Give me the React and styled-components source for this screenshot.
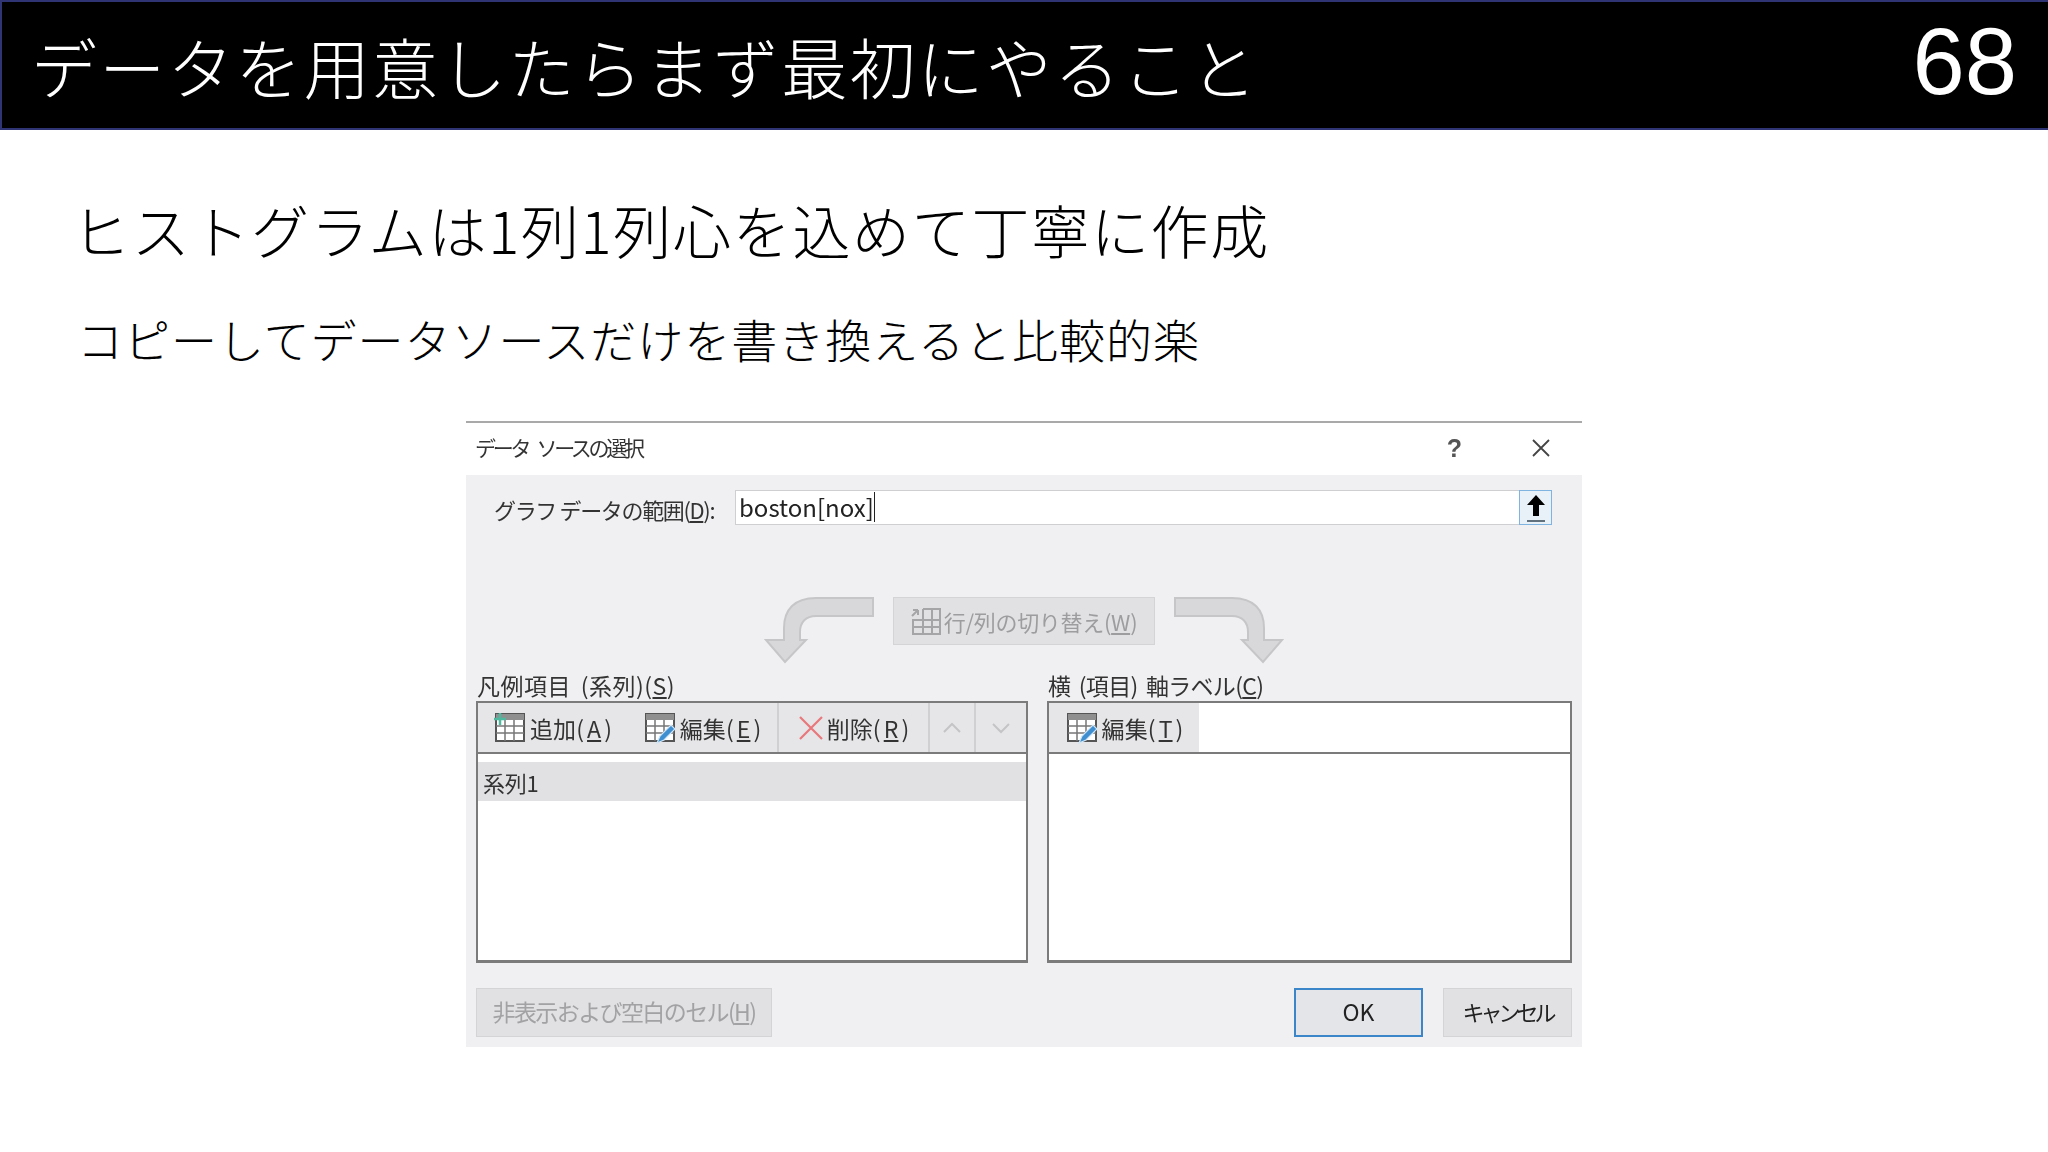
import React from "react";
import styled, { createGlobalStyle } from "styled-components";

const Global = createGlobalStyle`
  html, body { margin: 0; padding: 0; background: #fff; }
  body { font-family: "Noto Sans CJK JP", "Noto Sans", sans-serif; }
`;
const Page = styled.div`width: 2048px; height: 1152px; overflow: hidden; background: #fff;`;
const Header = styled.header`
  box-sizing: border-box; height: 130px; background: #000; border: 2px solid #2f3474;
  border-right: none; display: flex; justify-content: space-between; align-items: center;
  padding: 0 31px 0 29px; color: #fff;
`;
const Title = styled.h1`margin: 0; font-size: 66px; font-weight: 300; line-height: 1; letter-spacing: 2.2px;`;
const PageNo = styled.div`font-family: "Liberation Sans", sans-serif; font-size: 94px; line-height: 1; margin-top: -7px;`;
const Main = styled.main`padding: 64px 0 0 72px;`;
const Heading = styled.h2`margin: 0; font-size: 58px; font-weight: 300; line-height: 70px; color: #000; letter-spacing: 1.7px;`;
const Sub = styled.p`margin: 44px 0 0 5px; font-size: 46px; font-weight: 300; line-height: 60px; color: #000; letter-spacing: 1px;`;

const Dialog = styled.section`
  box-sizing: border-box; width: 1116px; height: 626px; margin: 53px 0 0 394px;
  border-top: 2px solid #a9a9a9; background: #f0f0f2; display: flex; flex-direction: column;
  color: #2a2a2a; font-size: 23px; filter: blur(0.6px);
`;
const TitleBar = styled.div`
  height: 52px; background: #fff; display: flex; align-items: center; justify-content: space-between;
  padding: 0 31px 0 9px; flex-shrink: 0;
`;
const DialogTitle = styled.span`font-size: 21px; letter-spacing: -3.3px; word-spacing: 7px; color: #333; margin-top: -5px;`;
const TitleActions = styled.div`display: flex; align-items: center; gap: 69px; margin-top: -2px;`;
const Help = styled.span`font-family: "Liberation Sans", sans-serif; font-size: 25px; font-weight: 700; color: #555;`;
const Body = styled.div`flex: 1; padding: 15px 10px 0; display: flex; flex-direction: column;`;
const RangeRow = styled.div`display: flex; align-items: center; height: 35px; padding-left: 18px; padding-right: 20px;`;
const RangeLabel = styled.label`width: 241px; flex-shrink: 0; font-size: 22px; letter-spacing: -1.35px; padding-top: 3px; color: #333;`;
const RangeInput = styled.div`
  flex: 1; height: 35px; box-sizing: border-box; background: #fff; border: 1px solid #cfcfd2;
  display: flex; align-items: center; justify-content: space-between;
`;
const RangeText = styled.span`font-size: 24px; color: #222; padding-left: 3px; line-height: 30px; margin-top: -2px; border-right: 1px solid #222;`;
const Collapse = styled.span`
  width: 33px; height: 35px; box-sizing: border-box; margin: -1px -1px -1px 0; border: 1px solid #7fb4e0;
  background: #e8f1f8; display: flex; align-items: center; justify-content: center;
`;
const SwitchRow = styled.div`
  display: flex; justify-content: flex-start; align-items: flex-start; height: 72px; margin-top: 71px;
  padding-left: 288px;
`;
const SwitchButton = styled.div`
  width: 262px; height: 48px; box-sizing: border-box; margin: 1px 19px 0 19px; background: #e1e1e3; border: 1px solid #d4d4d6;
  display: flex; align-items: center; justify-content: center; gap: 1px; color: #9d9d9f; font-size: 22px; letter-spacing: -0.3px; padding-right: 2px;
`;
const Panels = styled.div`display: grid; grid-template-columns: 552px 525px; gap: 0 19px; margin-top: 3px;`;
const PanelCol = styled.div`display: flex; flex-direction: column;`;
const PanelLabel = styled.div`
  height: 30px; line-height: 28px; font-size: 23px; letter-spacing: ${p => p.$ls}px; word-spacing: 4px;
  color: #333; padding-left: 1px; white-space: pre;
`;
const Panel = styled.div`
  height: 262px; box-sizing: border-box; background: #fff; border: 2px solid #7b7b7b; border-bottom-width: 3px; display: flex; flex-direction: column;
`;
const Toolbar = styled.div`display: flex; height: 49px; flex-shrink: 0; border-bottom: 2px solid #7b7b7b;`;
const ToolButton = styled.div`
  width: ${p => p.$w}px; flex-shrink: 0; box-sizing: border-box; background: #e6e6e8;
  border-right: ${p => (p.$sep ? "2px solid #d0d0d2" : "none")};
  display: flex; align-items: center; justify-content: center; gap: 3px;
  font-size: 23px; letter-spacing: 0.1px; color: #333;
`;
const ListItem = styled.div`
  margin-top: 8px; height: 39px; background: #e1e1e4; display: flex; align-items: center;
  padding-left: 5px; font-size: 22px; color: #333; letter-spacing: -0.3px;
`;
const Footer = styled.div`display: flex; align-items: flex-start; margin-top: 25px;`;
const FootButton = styled.div`
  width: ${p => p.$w}px; height: 49px; box-sizing: border-box; flex-shrink: 0; padding-bottom: 3px;
  background: ${p => (p.$primary ? "#e3e5e8" : "#e1e1e3")};
  border: ${p => (p.$primary ? "2px solid #3a86c8" : "1px solid #d4d4d6")};
  color: ${p => (p.$muted ? "#a2a2a4" : "#222")};
  display: flex; align-items: center; justify-content: center;
  font-size: ${p => p.$size || 23}px; letter-spacing: ${p => p.$ls || 0}px;
`;
const Spacer = styled.div`flex: 1;`;
const FooterGap = styled.div`width: 20px;`;

const TableIcon = ({ children }) => (
  <svg width="34" height="34" viewBox="0 0 34 34" fill="none">
    <rect x="3" y="3" width="28" height="27" fill="#fff" stroke="#555" strokeWidth="2" />
    <rect x="3" y="3" width="28" height="6" fill="#8f8f8f" />
    <path d="M3 15h28M3 22h28M12 9v21M21 9v21" stroke="#777" strokeWidth="1.5" />
    {children}
  </svg>
);
const AddTable = () => (
  <TableIcon>
    <path d="M1 8h12M7 2v12" stroke="#4fb9a0" strokeWidth="2.5" />
  </TableIcon>
);
const EditTable = () => (
  <TableIcon>
    <path d="M14 32l3-7L28 14l4 4-11 11z" fill="#3f8fd0" stroke="#cfe6f6" strokeWidth="1.2" />
  </TableIcon>
);
const CrossIcon = () => (
  <svg width="26" height="26" viewBox="0 0 26 26" fill="none">
    <path d="M2 2l22 22M24 2L2 24" stroke="#e8787c" strokeWidth="2.2" />
  </svg>
);
const Chevron = ({ up }) => (
  <svg width="22" height="14" viewBox="0 0 22 14" fill="none">
    <path d={up ? "M3 11l8-8 8 8" : "M3 3l8 8 8-8"} stroke="#c4c4c6" strokeWidth="2" />
  </svg>
);
const CloseIcon = () => (
  <svg width="20" height="20" viewBox="0 0 20 20" fill="none">
    <path d="M2 2l16 16M18 2L2 18" stroke="#444" strokeWidth="1.8" />
  </svg>
);
const UpArrow = () => (
  <svg width="24" height="31" viewBox="0 0 24 31" fill="none">
    <path d="M12 3L3 13h6v11h6V13h6z" fill="#000" />
    <path d="M3 29h18" stroke="#345" strokeWidth="1.5" />
  </svg>
);
const SwapIcon = () => (
  <svg width="34" height="30" viewBox="0 0 34 30" fill="none" stroke="#a5a5a7" strokeWidth="2">
    <path d="M14 3h17v25H4V14h27M14 3v25M23 3v25M4 21h27" />
    <path d="M3 10l6-6M9 4H4M9 4v5" />
  </svg>
);
const BendArrow = ({ flip }) => (
  <svg width="110" height="68" viewBox="0 0 110 68" fill="none" style={flip ? { transform: "scaleX(-1)" } : undefined}>
    <path
      d="M109 2H52C30 2 20 14 20 32V44H2L21 66L42 44H36V36C36 26 42 20 52 20H109Z"
      fill="#d8d8da"
      stroke="#c6c6c8"
      strokeWidth="2"
    />
  </svg>
);

export default function App() {
  return (
    <Page>
      <Global />
      <Header>
        <Title>データを用意したらまず最初にやること</Title>
        <PageNo>68</PageNo>
      </Header>
      <Main>
        <Heading>ヒストグラムは1列1列心を込めて丁寧に作成</Heading>
        <Sub>コピーしてデータソースだけを書き換えると比較的楽</Sub>
        <Dialog>
          <TitleBar>
            <DialogTitle>データ ソースの選択</DialogTitle>
            <TitleActions>
              <Help>?</Help>
              <CloseIcon />
            </TitleActions>
          </TitleBar>
          <Body>
            <RangeRow>
              <RangeLabel>グラフ データの範囲(<u>D</u>):</RangeLabel>
              <RangeInput>
                <RangeText>boston[nox]</RangeText>
                <Collapse><UpArrow /></Collapse>
              </RangeInput>
            </RangeRow>
            <SwitchRow>
              <BendArrow />
              <SwitchButton>
                <SwapIcon />
                <span>行/列の切り替え(<u>W</u>)</span>
              </SwitchButton>
              <BendArrow flip />
            </SwitchRow>
            <Panels>
              <PanelCol>
                <PanelLabel $ls={0.5}>凡例項目 (系列)(<u>S</u>)</PanelLabel>
                <Panel>
                  <Toolbar>
                    <ToolButton $w={149}><AddTable />追加(<u>A</u>)</ToolButton>
                    <ToolButton $w={152} $sep><EditTable />編集(<u>E</u>)</ToolButton>
                    <ToolButton $w={151} $sep><CrossIcon />削除(<u>R</u>)</ToolButton>
                    <ToolButton $w={46} $sep><Chevron up /></ToolButton>
                    <ToolButton $w={50}><Chevron /></ToolButton>
                  </Toolbar>
                  <ListItem>系列1</ListItem>
                </Panel>
              </PanelCol>
              <PanelCol>
                <PanelLabel $ls={-0.7}>横 (項目) 軸ラベル(<u>C</u>)</PanelLabel>
                <Panel>
                  <Toolbar>
                    <ToolButton $w={150}><EditTable />編集(<u>T</u>)</ToolButton>
                  </Toolbar>
                </Panel>
              </PanelCol>
            </Panels>
            <Footer>
              <FootButton $w={296} $muted $ls={-1.6}>非表示および空白のセル(<u>H</u>)</FootButton>
              <Spacer />
              <FootButton $w={129} $primary>OK</FootButton>
              <FooterGap />
              <FootButton $w={129} $size={22} $ls={-4}>キャンセル</FootButton>
            </Footer>
          </Body>
        </Dialog>
      </Main>
    </Page>
  );
}
